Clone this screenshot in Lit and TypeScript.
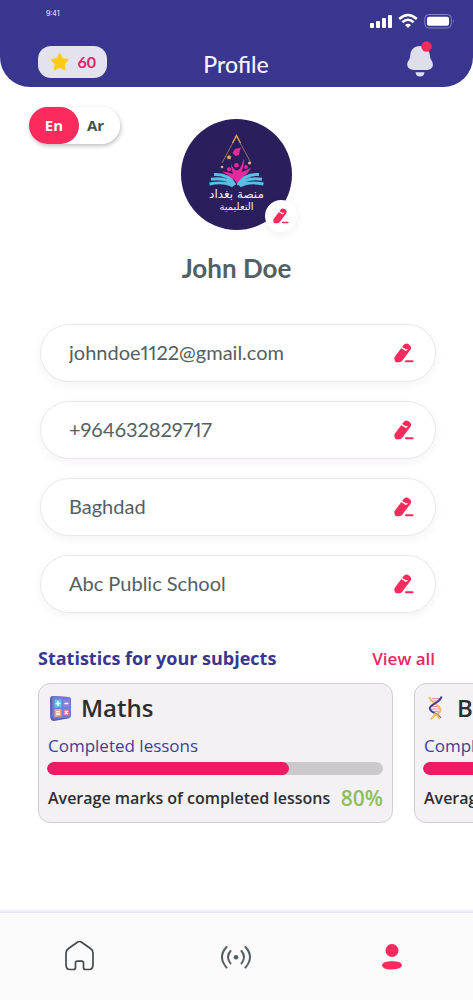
import { LitElement, html, css, svg } from "lit";
import { customElement, property, state } from "lit/decorators.js";

const pencil = html`<svg class="pencil" viewBox="0 0 20 20" aria-hidden="true">
  <path d="M9.400 2.200Q11.600-.8 15 1.400Q18.400 3.600 16.500 6.800L8.200 17.800Q7.200 19.200 5.600 19.200H2.500Q.9 19.200.7 17.500L.4 15.400Q.3 14.500 1 13.500Z" />
  <path d="M7.400 4.300Q9.800 5.700 10.700 6.400Q11.500 8 13.400 6.300" fill="none" stroke="#fff" stroke-width="1.400" />
  <rect x="11" y="17.200" width="8.600" height="2" rx="1" />
</svg>`;

const mathsIcon = svg`
  <path d="M1 4Q1 1 4 1L19 2Q22 2.300 22 5V20Q22 23 19 23.400L5 26Q1.500 26 1.200 22Z" fill="#5a5fb8"/>
  <path d="M3 3.500Q3 1 6 1.200L19 2Q22 2.300 22 5V19.500Q22 22 19 22.500L6 24Q3.400 24 3.200 21Z" fill="#7479d8"/>
  <path d="M5.500 4.500L12.500 4.300V12.400H5.500Z" fill="#5cc2e8"/>
  <path d="M14.200 4.500H20.500V12.300H14.200Z" fill="#8a83dd"/>
  <path d="M5.500 14H12.500V21.600L5.500 22Z" fill="#efa57d"/>
  <path d="M14.200 14H20.500V20.700L14.200 21.300Z" fill="#e45fa0"/>
  <path d="M9 6v5M6.600 8.500h4.800M15.400 8.500h4M7 16.700h4M7 19h4M15.700 15.800l3.400 3.400M19.100 15.800l-3.400 3.400" stroke="#fff" stroke-width="1.300" fill="none"/>`;

const dnaIcon = svg`
  <path d="M7 3.500h8M8 6h6M7 11.500h8M6 14h10M8 16.500h7" stroke="#e58ab4" stroke-width="1"/>
  <path d="M4.500 2C5.500 8 15.500 10 15.500 15C15.500 19.500 8 19 6 24.500" stroke="#f0bd63" stroke-width="2" fill="none"/>
  <path d="M16.500 1.500C15.500 8 4.500 9 4.800 13.500C5 17.500 12.500 18 15.500 23" stroke="#45408f" stroke-width="2" fill="none"/>
  <path d="M8.500 18.800Q13 20 14.500 23.500" stroke="#f0bd63" stroke-width="2" fill="none"/>`;

@customElement("status-header")
class StatusHeader extends LitElement {
  static styles = css`
    :host {
      display: block;
      background: #39368f;
      color: #f4f3fb;
      border-radius: 0 0 30px 30px;
      font-family: Lato, sans-serif;
    }
    .status {
      display: flex;
      justify-content: space-between;
      align-items: flex-start;
      padding: 9px 18px 0 46px;
      height: 36px;
      box-sizing: border-box;
    }
    .time {
      font: 7px/10px Inter, sans-serif;
    }
    .signals {
      display: flex;
      gap: 6px;
      padding-top: 4px;
    }
    .signals svg {
      display: block;
      height: 16px;
    }
    .bar {
      display: grid;
      grid-template-columns: 1fr auto 1fr;
      align-items: center;
      height: 51px;
      padding: 0 39px 0 38px;
    }
    .points {
      justify-self: start;
      display: flex;
      align-items: center;
      gap: 8px;
      width: 69px;
      height: 32px;
      padding: 0 11px 0 12px;
      box-sizing: border-box;
      border-radius: 13px;
      background: #e3e2ee;
      color: #e02468;
      font: 700 16px/20px Lato, sans-serif;
    }
    .points svg {
      width: 21px;
      height: 20px;
    }
    h1 {
      margin: 0;
      padding-top: 4px;
      font: 500 23px/28px Lato, sans-serif;
    }
    .bell {
      justify-self: end;
      padding: 0 0 6px;
      border: 0;
      background: none;
    }
    .bell svg {
      display: block;
      width: 28px;
      height: 36px;
    }
  `;
  render() {
    return html`
      <div class="status">
        <span class="time">9:41</span>
        <span class="signals">
          <svg width="22" viewBox="0 0 22 16" fill="#fff" aria-hidden="true">
            <rect y="10" width="4" height="5" rx="1" /><rect x="6" y="8" width="4" height="7" rx="1" />
            <rect x="12" y="5" width="4" height="10" rx="1" /><rect x="18" y="2" width="4" height="13" rx="1" />
          </svg>
          <svg width="20" viewBox="0 0 20 16" fill="none" stroke="#fff" stroke-width="2.500" aria-hidden="true">
            <path d="M1.200 6Q10-2 18.800 6M4.400 9.300Q10 4.300 15.600 9.300" />
            <path d="M7 12Q10 9.300 13 12L10 15Z" fill="#fff" stroke="none" />
          </svg>
          <svg width="31" viewBox="0 0 31 16" aria-hidden="true">
            <rect x=".8" y="1.500" width="26.500" height="13.500" rx="4" fill="none" stroke="#8481bd" stroke-width="1" />
            <rect x="3" y="3.700" width="22" height="9" rx="2" fill="#fff" />
            <path d="M29 6q1.800 2.200 0 4.500z" fill="#8481bd" />
          </svg>
        </span>
      </div>
      <div class="bar">
        <div class="points">
          <svg viewBox="0 0 21 20" aria-hidden="true">
            <path d="M10.500 1.500l2.600 5.300 5.900.9-4.200 4.200.9 5.900-5.200-2.700-5.200 2.700.9-5.900L2 7.700l5.900-.9z" fill="#ffc917" stroke="#ffc917" stroke-width="2" stroke-linejoin="round" />
          </svg>
          <span>60</span>
        </div>
        <h1>Profile</h1>
        <button class="bell" aria-label="Notifications">
          <svg viewBox="0 0 28 36" aria-hidden="true">
            <path d="M14 5C8 5 4.500 9 4.300 14Q4.300 17 2.600 19.500C-1 25 3 29 8 29H20C25.500 29 29 25 25.500 19.500Q23.800 17 23.800 14C23.500 9 20 5 14 5Z" fill="#dfdfec" />
            <path d="M9.500 31.200H18.500Q18 35.500 14 35.500T9.500 31.200Z" fill="#dfdfec" />
            <circle cx="20.500" cy="5.500" r="5.200" fill="#fb2a5c" />
          </svg>
        </button>
      </div>
    `;
  }
}

@customElement("subject-card")
class SubjectCard extends LitElement {
  @property() name = "";
  @property({ type: Number }) done = 0;
  @property({ type: Number }) average = 0;
  @property({ attribute: false }) icon: unknown;
  static styles = css`
    :host {
      display: block;
      flex: 0 0 355px;
      box-sizing: border-box;
      padding: 8px 9px 12px 8px;
      border: 1px solid #cfcdd0;
      border-radius: 12px;
      background: #f3f1f4;
      color: #2e2e31;
      font-family: Lato, sans-serif;
    }
    .title {
      display: flex;
      align-items: center;
      gap: 8px;
      padding-left: 2px;
    }
    .title svg {
      width: 24px;
      height: 27px;
    }
    h3 {
      margin: 0;
      font: 600 24px/32px "Open Sans", sans-serif;
    }
    .label {
      display: block;
      margin-top: 10px;
      padding-left: 1px;
      color: #423d96;
      font: 17px/24px "Open Sans", sans-serif;
    }
    progress {
      appearance: none;
      display: block;
      width: 100%;
      height: 13px;
      margin: 4px 0 11px;
      border: 0;
      border-radius: 7px;
      overflow: hidden;
      background: #cbc9cc;
    }
    progress::-webkit-progress-bar {
      background: #cbc9cc;
    }
    progress::-webkit-progress-value {
      background: #ed1c66;
      border-radius: 7px;
    }
    .average {
      display: flex;
      align-items: center;
      justify-content: space-between;
      padding-left: 1px;
      font: 600 16px/24px "Open Sans", sans-serif;
      white-space: nowrap;
    }
    .average b {
      color: #8cc057;
      font: 600 21px/24px "Open Sans", sans-serif;
    }
  `;
  render() {
    return html`
      <div class="title">
        <svg viewBox="0 0 24 27" aria-hidden="true">${this.icon}</svg>
        <h3>${this.name}</h3>
      </div>
      <label class="label" for="done">Completed lessons</label>
      <progress id="done" max="100" .value=${this.done}></progress>
      <div class="average"><span>Average marks of completed lessons</span><b>${this.average}%</b></div>
    `;
  }
}

@customElement("app-root")
class AppRoot extends LitElement {
  @state() private lang = "En";

  private fields = [
    { id: "email", label: "Email", type: "email", value: "johndoe1122@gmail.com" },
    { id: "phone", label: "Phone", type: "tel", value: "+964632829717" },
    { id: "city", label: "City", type: "text", value: "Baghdad" },
    { id: "school", label: "School", type: "text", value: "Abc Public School" },
  ];

  static styles = css`
    :host {
      display: flex;
      flex-direction: column;
      min-height: 100vh;
      background: #fff;
      font-family: Lato, sans-serif;
      color: #536063;
    }
    button {
      padding: 0;
      border: 0;
      background: none;
      cursor: pointer;
    }
    .pencil {
      display: block;
      width: 20px;
      height: 20px;
      fill: #fb2a5c;
    }
    .identity {
      display: grid;
      grid-template-columns: 1fr auto 1fr;
      padding: 20px 29px 0;
    }
    .lang {
      justify-self: start;
      align-self: start;
      position: relative;
      display: flex;
      margin: 0;
      padding: 0 8px 0 0;
      border: 0;
      border-radius: 19px;
      background: #fff;
      box-shadow: 1px 2px 4px rgba(0, 0, 0, 0.25);
    }
    .lang input {
      position: absolute;
      opacity: 0;
    }
    .lang label {
      width: 33px;
      border-radius: 19px;
      font: 700 15px/37px "Open Sans", sans-serif;
      text-align: center;
      color: #454d50;
    }
    .lang input:checked + label {
      width: 50px;
      background: #fb2a5c;
      color: #fff;
    }
    .avatar {
      position: relative;
      margin-top: 12px;
      width: 111px;
      height: 111px;
    }
    .avatar > svg {
      display: block;
      width: 111px;
      height: 111px;
    }
    .avatar button {
      position: absolute;
      right: -5px;
      bottom: -2px;
      display: grid;
      place-items: center;
      width: 32px;
      height: 32px;
      border-radius: 50%;
      background: #fff;
      box-shadow: 0 2px 8px rgba(60, 50, 90, 0.08);
    }
    .avatar .pencil {
      width: 16px;
      height: 16px;
    }
    h2 {
      margin: 22px 0 0;
      text-align: center;
      font: 700 26px/32px Lato, sans-serif;
    }
    form {
      display: flex;
      flex-direction: column;
      gap: 19px;
      margin: 40px 37px 0 40px;
    }
    .field {
      display: flex;
      align-items: center;
      height: 58px;
      padding: 0 21px 0 28px;
      box-sizing: border-box;
      border: 1px solid #eae7ec;
      border-radius: 29px;
      background: #fff;
      box-shadow: 0 3px 8px rgba(80, 40, 90, 0.06);
    }
    .field input {
      flex: 1;
      min-width: 0;
      padding: 0 0 2px;
      border: 0;
      outline: 0;
      background: none;
      color: inherit;
      font: 20px/28px Lato, sans-serif;
      font-variant-numeric: proportional-nums;
    }
    .stats-head {
      display: flex;
      justify-content: space-between;
      align-items: center;
      margin: 31px 38px 10px;
    }
    .stats-head h2 {
      margin: 0;
      color: #39368f;
      font: 700 18px/29px "Open Sans", sans-serif;
    }
    .stats-head a {
      color: #e62865;
      font: 600 17px/29px "Open Sans", sans-serif;
      text-decoration: none;
    }
    .cards {
      display: flex;
      gap: 21px;
      padding: 0 38px;
      overflow-x: auto;
      scrollbar-width: none;
    }
    nav {
      display: flex;
      justify-content: space-between;
      align-items: center;
      box-sizing: border-box;
      height: 87px;
      margin-top: auto;
      padding: 0 65px 0 64px;
      background: #fbfbfb;
      box-shadow: 0 -1px 3px 1px #dddcf3;
    }
    nav a {
      display: block;
    }
    nav svg {
      display: block;
      width: 32px;
      height: 32px;
    }
  `;

  private logo() {
    return html`<svg viewBox="0 0 111 111" role="img" aria-label="Baghdad learning platform">
      <circle cx="55.500" cy="55.500" r="55.500" fill="#2b1e5c" />
      <path d="M41 44L55.500 17L70 44" fill="none" stroke="#a8745c" stroke-width=".9" />
      <path d="M51.500 24L55.500 16.500L59.500 24" fill="none" stroke="#e9a45a" stroke-width="1.300" />
      <path d="M51.500 34l2.500-4 6-1.500-1.500 4.500-.5 3-3.500 1z" fill="#e62a9d" />
      <g fill="#f2b164">
        <path d="M48 35.500l.9 1.700 1.900.2-1.400 1.300.4 1.900-1.800-.9-1.700.9.400-1.900-1.400-1.300 1.900-.2z" />
        <circle cx="41" cy="48" r="1.300" /><circle cx="68.500" cy="44" r="1.500" />
      </g>
      <g fill="#e62a9d">
        <path d="M57 67Q54 58 43 54L41.500 52.500Q48 53 52 55Q50 50 50 45Q52 50 55.500 51.500Q59 51 61 45L63 39Q63.500 45 60.500 53Q65 52 70 48.500Q67 55 62 58Q58 62 57 67Z" />
        <path d="M54 66Q49 58 39.500 58Q46 53.500 52 59Z" />
        <path d="M59.500 66Q62 60 70.500 56.500Q69 63 59.500 66Z" />
        <circle cx="48" cy="50.300" r="2" /><circle cx="55.500" cy="46.300" r="2.300" /><circle cx="65" cy="48" r="1.900" />
      </g>
      <g fill="none" stroke="#59bfe3" stroke-width="3">
        <path d="M33 55.500Q48 54.500 54 66M30 60.300Q46 58 53 66.500M28.500 65Q43 62 52 67" />
        <path d="M78 55.500Q63 54.500 57 66M81 60.300Q65 58 58 66.500M82.500 65Q68 62 59 67" />
      </g>
      <g fill="#f3f0fa" text-anchor="middle" font-family="DejaVu Sans, sans-serif">
        <text x="55.500" y="79" font-size="12">منصة بغداد</text>
        <text x="55.500" y="91" font-size="10">التعليمية</text>
      </g>
    </svg>`;
  }

  render() {
    return html`
      <status-header></status-header>
      <main>
        <section class="identity">
          <fieldset class="lang">
            ${["En", "Ar"].map(
              (l) => html`<input type="radio" name="lang" id=${l} .checked=${this.lang === l} @change=${() => (this.lang = l)} /><label for=${l}>${l}</label>`
            )}
          </fieldset>
          <div class="avatar">
            ${this.logo()}
            <button aria-label="Change picture">${pencil}</button>
          </div>
        </section>
        <h2>John Doe</h2>
        <form>
          ${this.fields.map(
            (f) => html`<div class="field">
              <input id=${f.id} type=${f.type} aria-label=${f.label} .value=${f.value} />
              <button type="button" aria-label="Edit ${f.label}">${pencil}</button>
            </div>`
          )}
        </form>
        <section>
          <div class="stats-head">
            <h2>Statistics for your subjects</h2>
            <a href="#all">View all</a>
          </div>
          <div class="cards">
            <subject-card name="Maths" .done=${72} .average=${80} .icon=${mathsIcon}></subject-card>
            <subject-card name="Biology" .done=${72} .average=${80} .icon=${dnaIcon}></subject-card>
          </div>
        </section>
      </main>
      <nav>
        <a href="#home" aria-label="Home">
          <svg viewBox="0 0 32 32" fill="none" stroke="#45494c" stroke-width="1.700" stroke-linejoin="round">
            <path d="M13.400 1.200Q15.500-.2 17.600 1.200L26.500 7.500Q29 9.200 29 12V23.500Q29 28.500 25 28.500H21.500Q19.500 28.500 19.500 26.500V22Q19.500 20.200 17.700 20.200H13.300Q11.500 20.200 11.500 22V26.500Q11.500 28.500 9.500 28.500H6Q2 28.500 2 23.500V12Q2 9.200 4.500 7.500Z" />
          </svg>
        </a>
        <a href="#live" aria-label="Live">
          <svg viewBox="0 0 32 32" fill="none" stroke="#536063" stroke-width="2" stroke-linecap="round">
            <path d="M6.500 6Q-2.500 16 6.500 26.500M10.500 10Q5.500 16 10.500 22.500M25.500 6Q34.500 16 25.500 26.500M21.500 10Q26.500 16 21.500 22.500" />
            <circle cx="16" cy="16.200" r="2.300" fill="#536063" stroke="none" />
          </svg>
        </a>
        <a href="#profile" aria-label="Profile" aria-current="page">
          <svg viewBox="0 0 32 32" fill="#fb2a5c">
            <circle cx="16" cy="9.500" r="6.500" />
            <path d="M6 24.300Q6.500 20.500 16 20.300T26 24.300Q25.500 28.300 16 28.500T6 24.300Z" />
          </svg>
        </a>
      </nav>
    `;
  }
}
